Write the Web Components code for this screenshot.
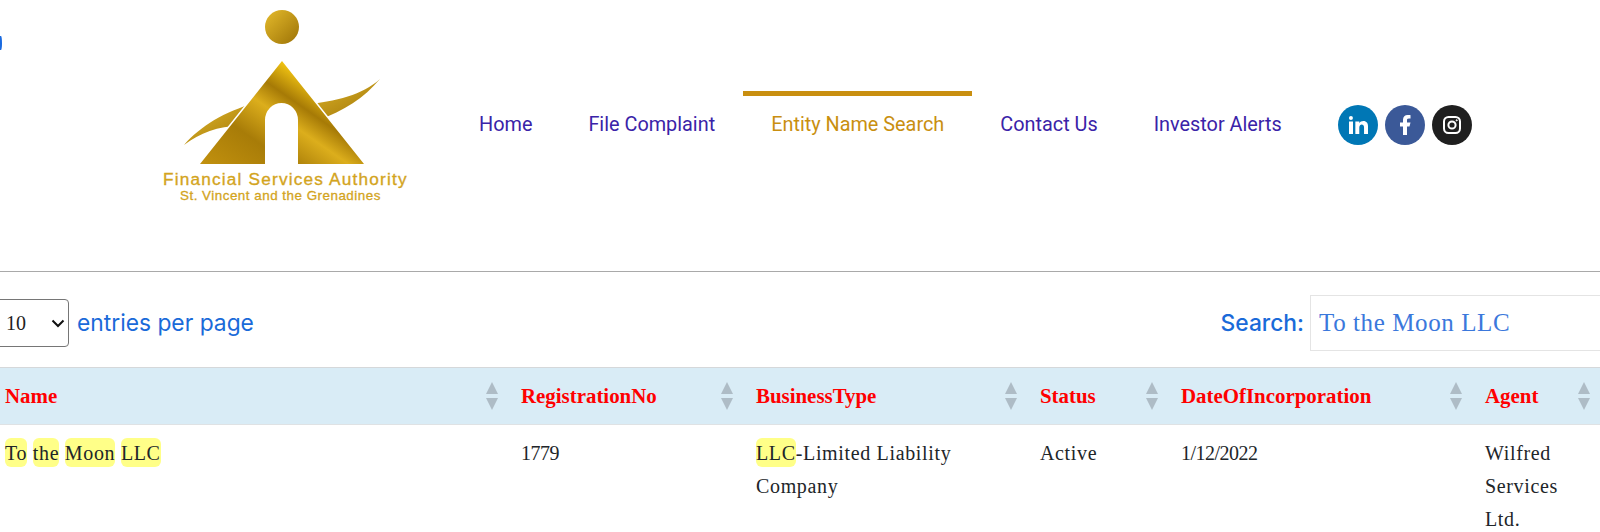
<!DOCTYPE html>
<html>
<head>
<meta charset="utf-8">
<title>Entity Name Search</title>
<style>
  html, body { margin: 0; height: 532px; overflow: hidden; background: #fff; }
</style>
</head>
<body>
<fsa-header>
  <nav-link>Home</nav-link>
  <nav-link>File Complaint</nav-link>
  <nav-link active>Entity Name Search</nav-link>
  <nav-link>Contact Us</nav-link>
  <nav-link>Investor Alerts</nav-link>
</fsa-header>
<table-controls></table-controls>
<entity-table>
  <head-cell>Name</head-cell>
  <head-cell>RegistrationNo</head-cell>
  <head-cell>BusinessType</head-cell>
  <head-cell>Status</head-cell>
  <head-cell>DateOfIncorporation</head-cell>
  <head-cell>Agent</head-cell>
  <data-cell><mark-word>To</mark-word> <mark-word>the</mark-word> <mark-word>Moon</mark-word> <mark-word>LLC</mark-word></data-cell>
  <data-cell num>1779</data-cell>
  <data-cell><mark-word>LLC</mark-word>-Limited Liability Company</data-cell>
  <data-cell>Active</data-cell>
  <data-cell num>1/12/2022</data-cell>
  <data-cell>Wilfred Services Ltd.</data-cell>
</entity-table>

<script>
class FsaHeader extends HTMLElement {
  constructor() {
    super();
    this.attachShadow({ mode: 'open' }).innerHTML = /*html*/ `
    <style>
      :host { display: flex; height: 271px; border-bottom: 1px solid #a9a9a9; position: relative; }
      #dot { position: absolute; left: 0; top: 36px; width: 2px; height: 14px; background: #1a6ae0; border-radius: 0 100% 100% 0; }
      nav { display: flex; align-self: flex-start; margin: 91px 0 0 11px; }
      fsa-social { margin: 105px 0 0 28px; }
    </style>
    <div id="dot"></div>
    <fsa-logo></fsa-logo>
    <nav><slot></slot></nav>
    <fsa-social></fsa-social>`;
  }
}

class FsaLogo extends HTMLElement {
  constructor() {
    super();
    this.attachShadow({ mode: 'open' }).innerHTML = /*html*/ `
    <style>
      :host { display: block; width: 300px; margin-left: 140px; font-family: "Liberation Sans", Arial, sans-serif; color: #d3a41d; }
      svg { display: block; }
      #name { font-size: 17.2px; -webkit-text-stroke: .35px #d3a41d; letter-spacing: 1.2px; line-height: 18px; margin: 5px 0 0 23px; white-space: nowrap; }
      #place { font-size: 13.4px; -webkit-text-stroke: .3px #d3a41d; line-height: 15px; letter-spacing: .5px; margin: 0 0 0 40px; white-space: nowrap; }
    </style>
    <svg width="300" height="165" viewBox="0 0 300 165">
      <defs>
        <linearGradient id="g" x1="0" y1="1" x2="1" y2="0.1">
          <stop offset="0" stop-color="#c2910e"/>
          <stop offset=".3" stop-color="#a87c08"/>
          <stop offset=".5" stop-color="#dcae1c"/>
          <stop offset=".62" stop-color="#a67a06"/>
          <stop offset=".8" stop-color="#ffd115"/>
          <stop offset="1" stop-color="#b08408"/>
        </linearGradient>
        <linearGradient id="s" x1="0" y1="0" x2="1" y2="1">
          <stop offset="0" stop-color="#e5bb2c"/>
          <stop offset="1" stop-color="#9c7206"/>
        </linearGradient>
      </defs>
      <circle cx="142" cy="27" r="17" fill="url(#s)"/>
      <path fill="url(#s)" d="M44 145C62 125 84 112 118 102L100 126C78 126 60 133 44 145Z"/>
      <path fill="url(#s)" d="M240 79C222 95 198 101 162 105L178 120C204 111 224 98 240 79Z"/>
      <path fill="url(#g)" stroke="#fff" stroke-width="3" paint-order="stroke" d="M142 61L224 164H158V120A16.5 17 0 0 0 125 120V164H60Z"/>
    </svg>
    <div id="name">Financial Services Authority</div>
    <div id="place">St. Vincent and the Grenadines</div>`;
  }
}

class NavLink extends HTMLElement {
  constructor() {
    super();
    this.attachShadow({ mode: 'open' }).innerHTML = /*html*/ `
    <style>
      :host { display: block; border-top: 5px solid transparent; padding: 18px 28px 0; font: 400 19.85px/22px Roboto, sans-serif; color: #3a23a8; white-space: nowrap; }
      :host([active]) { border-top-color: #c98f10; color: #c98f10; }
    </style>
    <slot></slot>`;
  }
}

class FsaSocial extends HTMLElement {
  constructor() {
    super();
    this.attachShadow({ mode: 'open' }).innerHTML = /*html*/ `
    <style>
      :host { display: flex; gap: 7px; align-self: flex-start; }
      span { display: flex; align-items: center; justify-content: center; width: 40px; height: 40px; border-radius: 50%; }
      svg { width: 24px; height: 24px; fill: #fff; }
    </style>
    <span style="background:#0077b5"><svg viewBox="0 0 24 24"><path d="M6.94 5a2 2 0 1 1-4-.002 2 2 0 0 1 4 .002zM7 8.48H3V21h4V8.48zm6.32 0H9.34V21h3.94v-6.57c0-3.66 4.77-4 4.77 0V21H22v-7.93c0-6.17-7.06-5.94-8.72-2.91l.04-1.68z"/></svg></span>
    <span style="background:#3b5998"><svg viewBox="0 0 24 24"><path d="M14 13.5h2.5l1-4H14v-2c0-1.03 0-2 2-2h1.5V2.14c-.326-.043-1.557-.14-2.857-.14C11.928 2 10 3.657 10 6.7v2.8H7v4h3V22h4v-8.5z"/></svg></span>
    <span style="background:#1f1f1f"><svg viewBox="0 0 24 24" style="fill:none;stroke:#fff;stroke-width:2"><rect x="4" y="4" width="16" height="16" rx="4.5"/><circle cx="12" cy="12" r="3.6"/><circle cx="16.7" cy="7.3" r=".6" fill="#fff" stroke-width="1"/></svg></span>`;
  }
}

class TableControls extends HTMLElement {
  constructor() {
    super();
    this.attachShadow({ mode: 'open' }).innerHTML = /*html*/ `
    <style>
      :host { display: flex; justify-content: space-between; align-items: center; height: 89px; padding-top: 6px; font: 400 22.8px Inter, sans-serif; color: #1a6ad9; }
      div { display: flex; align-items: center; }
      select { appearance: none; width: 90px; height: 48px; margin: 0 8px 0 -21px; padding-left: 26px; border: 1px solid #767676; border-radius: 4px; font: 20px "Liberation Serif", serif; color: #222;
        background: #fff url("data:image/svg+xml,%3Csvg xmlns='http://www.w3.org/2000/svg' width='14' height='9'%3E%3Cpath d='M1.5 1.5L7 7l5.5-5.5' fill='none' stroke='%23111' stroke-width='2'/%3E%3C/svg%3E") no-repeat 71px 19px; }
      label { font-weight: 500; margin-right: 6px; }
      input { width: 300px; height: 54px; margin-right: -20px; box-sizing: content-box; padding: 0 0 0 8px; border: 1px solid #e4e4e4; font: 25px "Liberation Serif", serif; letter-spacing: .6px; color: #3b78dc; outline: none; }
    </style>
    <div><select><option>10</option></select>entries per page</div>
    <div><label>Search:</label><input value="To the Moon LLC"></div>`;
  }
}

class EntityTable extends HTMLElement {
  constructor() {
    super();
    this.attachShadow({ mode: 'open' }).innerHTML = /*html*/ `
    <style>
      :host { display: grid; grid-template-columns: 516px 235px 284px 141px 304px 128px; margin-left: -5px; width: 1608px; }
    </style>
    <slot></slot>`;
  }
}

class HeadCell extends HTMLElement {
  constructor() {
    super();
    this.attachShadow({ mode: 'open' }).innerHTML = /*html*/ `
    <style>
      :host { display: flex; justify-content: space-between; align-items: center; height: 56px; padding: 0 13px 0 10px; background: #d9ecf6; border-top: 1px solid #d5d8da; border-bottom: 1px solid #dfe2e4;
        font: 700 20.9px "Liberation Serif", serif; color: #f00; }
      svg { display: block; width: 12px; height: 28px; fill: #aebcc6; }
    </style>
    <span><slot></slot></span>
    <svg viewBox="0 0 12 28"><path d="M6 0L12 12H0Z"/><path d="M0 16H12L6 28Z"/></svg>`;
  }
}

class DataCell extends HTMLElement {
  constructor() {
    super();
    this.attachShadow({ mode: 'open' }).innerHTML = /*html*/ `
    <style>
      :host { display: block; padding: 12px 10px; font: 400 20px/33px "Liberation Serif", serif; letter-spacing: .65px; color: #212529; }
      :host([num]) { letter-spacing: -.5px; }
    </style>
    <slot></slot>`;
  }
}

class MarkWord extends HTMLElement {
  constructor() {
    super();
    this.attachShadow({ mode: 'open' }).innerHTML = /*html*/ `
    <style>
      :host { background: #ffff88; border-radius: 6px; padding: 4px 0 3px; }
    </style>
    <slot></slot>`;
  }
}

customElements.define('fsa-logo', FsaLogo);
customElements.define('fsa-social', FsaSocial);
customElements.define('fsa-header', FsaHeader);
customElements.define('nav-link', NavLink);
customElements.define('table-controls', TableControls);
customElements.define('entity-table', EntityTable);
customElements.define('head-cell', HeadCell);
customElements.define('data-cell', DataCell);
customElements.define('mark-word', MarkWord);
</script>
</body>
</html>
